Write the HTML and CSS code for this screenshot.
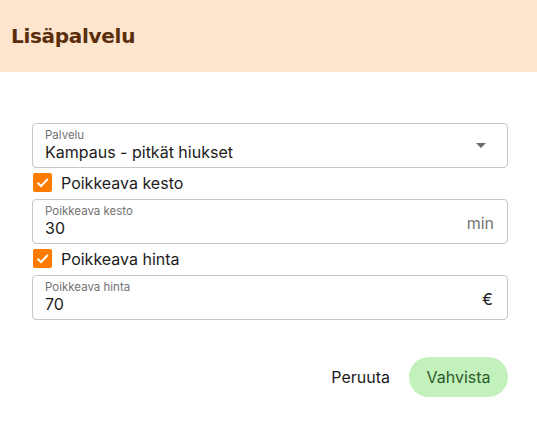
FILE: index.html
```html
<!DOCTYPE html>
<html lang="fi">
<head>
<meta charset="utf-8">
<title>Lisäpalvelu</title>
<link rel="stylesheet" href="styles.css">
</head>
<body>
<div class="dialog">
  <div class="header"><h1 class="title">Lisäpalvelu</h1></div>
  <div class="content">
    <div class="field">
      <div class="field-main">
        <div class="label">Palvelu</div>
        <div class="value">Kampaus - pitkät hiukset</div>
      </div>
      <svg class="arrow" width="10" height="5" viewBox="0 0 10 5"><path d="M0 0 L10 0 L5 5 Z" fill="#6b6b6b"/></svg>
    </div>
    <label class="check-row">
      <span class="checkbox"><svg width="19" height="19" viewBox="0 0 19 19"><path d="M4.5 9.8 L8 13.2 L14.8 6" fill="none" stroke="#fff" stroke-width="2"/></svg></span>
      <span class="check-text">Poikkeava kesto</span>
    </label>
    <div class="field">
      <div class="field-main">
        <div class="label">Poikkeava kesto</div>
        <div class="value">30</div>
      </div>
      <span class="suffix">min</span>
    </div>
    <label class="check-row">
      <span class="checkbox"><svg width="19" height="19" viewBox="0 0 19 19"><path d="M4.5 9.8 L8 13.2 L14.8 6" fill="none" stroke="#fff" stroke-width="2"/></svg></span>
      <span class="check-text">Poikkeava hinta</span>
    </label>
    <div class="field">
      <div class="field-main">
        <div class="label">Poikkeava hinta</div>
        <div class="value">70</div>
      </div>
      <span class="suffix euro">€</span>
    </div>
  </div>
  <div class="actions">
    <button class="btn-text">Peruuta</button>
    <button class="btn-confirm">Vahvista</button>
  </div>
</div>
</body>
</html>
```
FILE: styles.css
```css
html, body {
  margin: 0;
  padding: 0;
  background: #ffffff;
}
body {
  font-family: Inter, "Noto Sans", sans-serif;
  color: #1f1f1f;
}
.dialog {
  width: 537px;
  height: 427px;
  background: #fff;
}
.header {
  height: 72px;
  background: #fee5cd;
  display: flex;
  align-items: center;
  padding-left: 11px;
  box-sizing: border-box;
}
.title {
  margin: 0;
  font-family: "DejaVu Sans", sans-serif;
  font-weight: 700;
  font-size: 20px;
  color: #5a2e0c;
  letter-spacing: -0.3px;
}
.content {
  padding: 51px 29px 0 32px;
}
.field {
  height: 45px;
  box-sizing: border-box;
  border: 1px solid #c6c6c6;
  border-radius: 4px;
  display: flex;
  align-items: center;
  padding: 0 13px 0 12px;
}
.field-main {
  flex: 1;
  display: flex;
  flex-direction: column;
}
.label {
  font-size: 11.5px;
  line-height: 13px;
  color: #737373;
}
.value {
  font-size: 16px;
  line-height: 20px;
  color: #1c1c1c;
}
.arrow {
  margin-right: 8px;
}
.suffix {
  font-size: 16px;
  color: #767676;
  margin-top: 2px;
}
.euro {
  color: #1c1c1c;
  margin-right: 1px;
}
.check-row {
  height: 31px;
  display: flex;
  align-items: center;
}
.checkbox {
  width: 19px;
  height: 19px;
  background: #ff7b00;
  border-radius: 2px;
  margin: -2px 0 0 1px;
  display: flex;
}
.check-text {
  margin-left: 9px;
  margin-top: -1px;
  font-size: 16px;
  color: #1c1c1c;
}
.actions {
  display: flex;
  justify-content: flex-end;
  align-items: center;
  padding: 37px 29px 0 0;
  gap: 9px;
}
.btn-text {
  font-family: Inter, sans-serif;
  font-size: 16px;
  background: none;
  border: none;
  color: #1c1c1c;
  padding: 0 10px;
  height: 40px;
}
.btn-confirm {
  font-family: Inter, sans-serif;
  font-size: 16px;
  background: #c2f1bb;
  color: #2d5a2b;
  border: none;
  border-radius: 20px;
  height: 40px;
  width: 99px;
  padding: 0;
}
```
